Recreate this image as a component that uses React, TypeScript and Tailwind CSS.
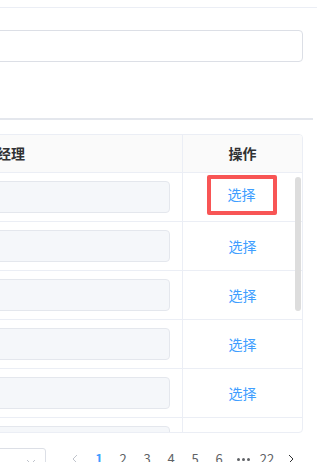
import React from 'react'

const rows = [0, 1, 2, 3, 4, 5]
const pages = ['1', '2', '3', '4', '5', '6']

const font = { fontFamily: '"Noto Sans CJK SC", "Noto Sans", sans-serif' }

function Chevron({ dir, className }: { dir: 'left' | 'right' | 'down'; className?: string }) {
  const d =
    dir === 'left' ? 'M8 2 L4 6 L8 10' : dir === 'right' ? 'M4 2 L8 6 L4 10' : 'M2 4 L6 8 L10 4'
  return (
    <svg width="12" height="12" viewBox="0 0 12 12" className={className}>
      <path d={d} fill="none" stroke="currentColor" strokeWidth="1" />
    </svg>
  )
}

export default function App() {
  return (
    <div className="w-[317px] h-[462px] overflow-hidden bg-white" style={font}>
      {/* top divider */}
      <div className="h-[8px] border-b border-[#ebeef5]" />

      {/* search input */}
      <div className="mt-[22px] -ml-[10px] mr-[14px] h-[32px] rounded-[4px] border border-[#dcdfe6] bg-white" />

      {/* section divider */}
      <div className="mt-[56px] mr-[4px] h-[2px] bg-[#e4e7ed]" />

      {/* table */}
      <div className="relative mt-[14px] -ml-[10px] mr-[14px] h-[299px] overflow-hidden rounded-tr-[4px] rounded-br-[4px] border border-[#ebeef5]">
        <div className="flex h-[38px] border-b border-[#ebeef5] bg-[#fafafa] text-[14px] font-bold text-[#303133]">
          <div className="flex min-w-0 flex-1 items-center overflow-hidden border-r border-[#ebeef5]">
            <span className="ml-[-22px] whitespace-nowrap">项目经理</span>
          </div>
          <div className="flex w-[119px] shrink-0 items-center justify-center">操作</div>
        </div>

        {rows.map((r) => (
          <div key={r} className="flex h-[49px] border-b border-[#ebeef5]">
            <div className="min-w-0 flex-1 border-r border-[#ebeef5] pr-[12px] pt-[8px]">
              <div className="h-[32px] rounded-[4px] border border-[#e4e7ed] bg-[#f5f7fa]" />
            </div>
            <div className="flex w-[119px] shrink-0 items-center justify-center text-[14px] text-[#409eff]">
              {r === 0 ? (
                <span className="mt-[-5px] ml-[-2px] flex h-[40px] w-[70px] items-center justify-center rounded-[2px] border-[4px] border-[#f85555]">
                  选择
                </span>
              ) : (
                <span>选择</span>
              )}
            </div>
          </div>
        ))}

        {/* scrollbar thumb */}
        <div className="absolute right-[1px] top-[42px] h-[134px] w-[6px] rounded-[3px] bg-[#dddddd]" />
      </div>

      {/* pagination */}
      <div className="mt-[15px] flex items-start">
        <div className="-ml-[10px] flex h-[28px] w-[56px] shrink-0 items-center justify-end rounded-[3px] border border-[#dcdfe6] pr-[8px] text-[#c0c4cc]">
          <Chevron dir="down" />
        </div>
        <div className="ml-[17px] flex shrink-0 items-center pt-[1px] text-[13px] text-[#606266]">
          <div className="flex w-[24px] shrink-0 justify-center text-[#c0c4cc]">
            <Chevron dir="left" />
          </div>
          {pages.map((p) => (
            <div
              key={p}
              className={
                p === '1'
                  ? 'flex w-[24px] shrink-0 justify-center font-bold text-[#409eff]'
                  : 'flex w-[24px] shrink-0 justify-center'
              }
            >
              {p}
            </div>
          ))}
          <div className="flex w-[24px] shrink-0 items-center justify-center gap-[2px] pt-[2px]">
            <span className="h-[3px] w-[3px] rounded-full bg-[#606266]" />
            <span className="h-[3px] w-[3px] rounded-full bg-[#606266]" />
            <span className="h-[3px] w-[3px] rounded-full bg-[#606266]" />
          </div>
          <div className="flex w-[24px] shrink-0 justify-center">22</div>
          <div className="flex w-[24px] shrink-0 justify-center text-[#303133]">
            <Chevron dir="right" />
          </div>
        </div>
      </div>
    </div>
  )
}
